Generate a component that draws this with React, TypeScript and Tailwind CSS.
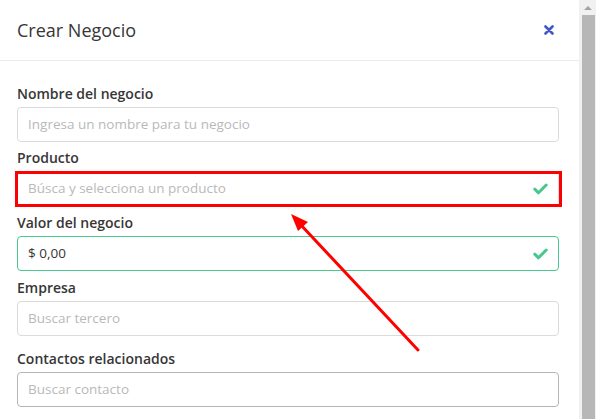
import React from 'react';

function Check() {
  return (
    <svg width="15" height="12" viewBox="0 0 15 12" className="shrink-0">
      <path d="M1.8 6.2 L5.5 9.8 L13.2 2" fill="none" stroke="#48c78e" strokeWidth="3" strokeLinecap="round" strokeLinejoin="round" />
    </svg>
  );
}

function Field({
  label,
  placeholder,
  value,
  state,
  className = '',
}: {
  label: string;
  placeholder?: string;
  value?: string;
  state?: 'ok' | 'hover';
  className?: string;
}) {
  const border =
    state === 'ok' && value
      ? 'border-[#48c78e]'
      : state === 'hover'
      ? 'border-[#b5b5b5]'
      : 'border-[#dbdbdb]';
  return (
    <div className={className}>
      <div className="text-[14px] leading-[18px] font-semibold text-[#363636] mb-[4px]">{label}</div>
      <div className={`h-[35px] rounded-[4px] border ${border} bg-white flex items-center justify-between pl-[10px] pr-[10px] text-[13.5px]`}>
        {value ? (
          <span className="text-[#363636]">{value}</span>
        ) : (
          <span className="text-[#b9b9b9]">{placeholder}</span>
        )}
        {state === 'ok' && <Check />}
      </div>
    </div>
  );
}

export default function App() {
  return (
    <div
      className="relative w-[596px] h-[419px] overflow-hidden bg-white flex"
      style={{ fontFamily: '"Open Sans", "Noto Sans", sans-serif' }}
    >
      <div className="flex-1 flex flex-col">
        <header className="h-[61px] border-b border-[#ebebeb] flex items-center justify-between pl-[17px] pr-[25px]">
          <h2 className="text-[18px] text-[#363636]">Crear Negocio</h2>
          <svg width="10" height="10" viewBox="0 0 10 10">
            <path d="M1.5 1.5 L8.5 8.5 M8.5 1.5 L1.5 8.5" stroke="#4256c8" strokeWidth="2.6" strokeLinecap="round" />
          </svg>
        </header>

        <div className="pt-[24px] pl-[17px] pr-[20px] flex flex-col">
          <Field label="Nombre del negocio" placeholder="Ingresa un nombre para tu negocio" />
          <div className="relative mt-[7px]">
            <Field label="Producto" placeholder="Búsca y selecciona un producto" state="ok" />
            <div className="absolute left-[-2px] right-[-3px] bottom-[-1px] h-[36px] border-[3px] border-[#ff0000]" />
          </div>
          <Field className="mt-[8px]" label="Valor del negocio" value="$ 0,00" state="ok" />
          <Field className="mt-[8px]" label="Empresa" placeholder="Buscar tercero" />
          <Field className="mt-[14px]" label="Contactos relacionados" placeholder="Buscar contacto" state="hover" />
        </div>
      </div>

      {/* scrollbar */}
      <div className="w-[17px] bg-[#f1f1f1] flex flex-col items-center">
        <div className="h-[15px] flex items-center justify-center">
          <div className="w-0 h-0 border-l-[4px] border-r-[4px] border-b-[4px] border-l-transparent border-r-transparent border-b-[#a3a3a3]" />
        </div>
        <div className="flex-1 w-[13px] ml-[1px] bg-[#b7b7b7]" />
      </div>

      {/* annotation arrow */}
      <svg className="absolute inset-0 pointer-events-none" width="596" height="419">
        <line x1="418" y1="350" x2="300" y2="224" stroke="#ff0000" strokeWidth="3" strokeLinecap="round" />
        <polygon points="291,214 308,222 298,231" fill="#ff0000" />
      </svg>
    </div>
  );
}
